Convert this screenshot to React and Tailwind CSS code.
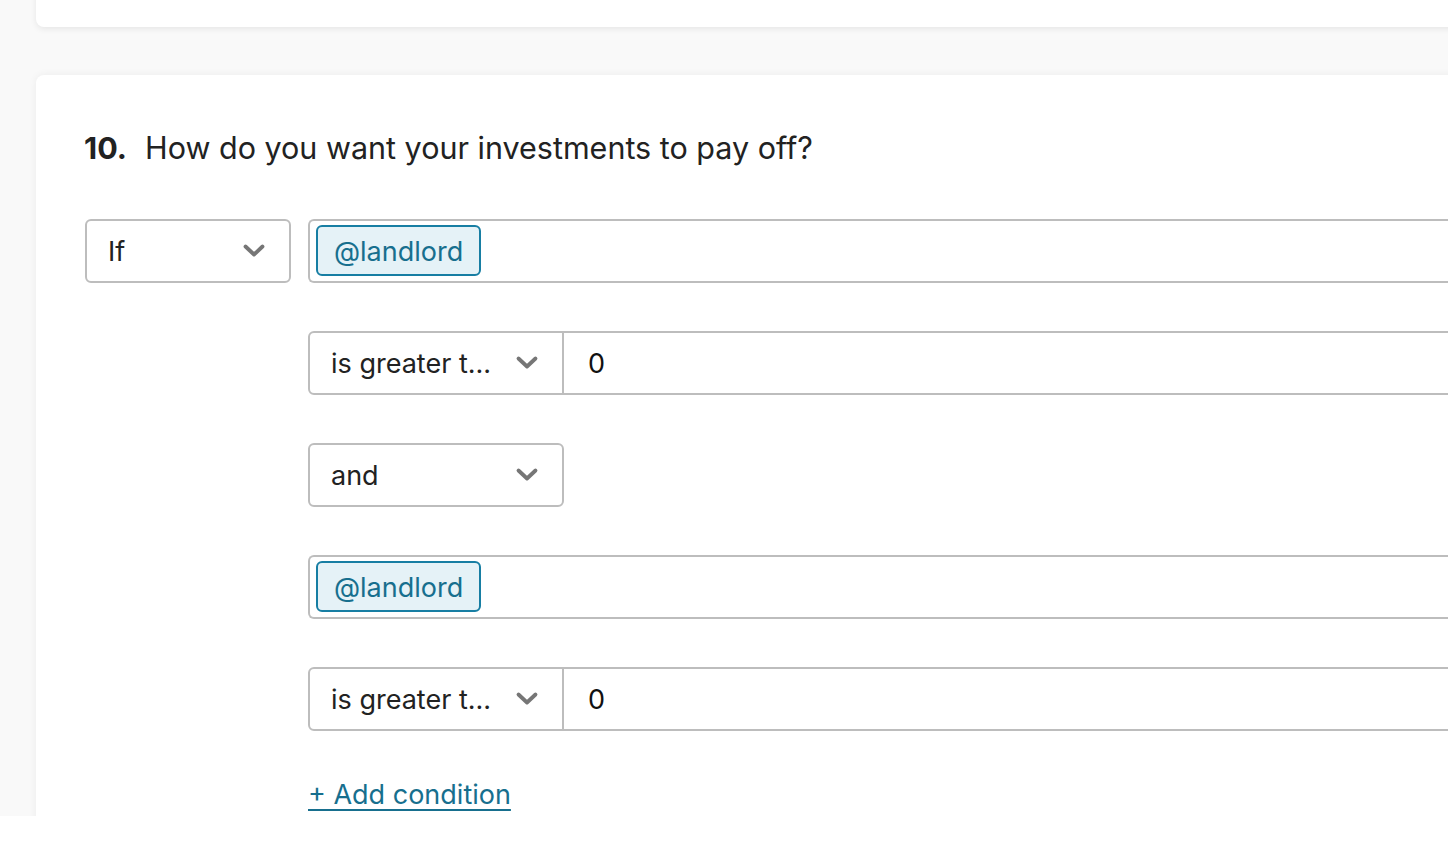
function Chevron() {
  return (
    <svg width="24" height="16" viewBox="0 0 24 16" className="shrink-0">
      <polyline
        points="3.5,3.5 12,11.5 20.5,3.5"
        fill="none"
        stroke="#767676"
        strokeWidth="3.8"
        strokeLinecap="round"
        strokeLinejoin="round"
      />
    </svg>
  )
}

function Select({ label, width }) {
  return (
    <div
      className={`flex items-center justify-between h-16 pl-[21px] pr-[23px] border-2 border-[#bdbdbd] rounded-md bg-white ${width}`}
    >
      <span className="mt-[3px] text-[27px] text-[#222]">{label}</span>
      <Chevron />
    </div>
  )
}

function TagField() {
  return (
    <div className="flex items-center w-full h-16 pl-[6px] border-2 border-r-0 border-[#bdbdbd] rounded-l-md bg-white">
      <span className="flex items-center h-[51px] pt-[3px] px-[16px] bg-[#e5f2f7] border-2 border-[#177ea3] rounded-md text-[27px] text-[#176f8e]">
        @landlord
      </span>
    </div>
  )
}

function Comparison() {
  return (
    <div className="flex w-full h-16">
      <div className="flex items-center justify-between w-[256px] h-16 pl-[21px] pr-[23px] border-2 border-[#bdbdbd] rounded-l-md bg-white">
        <span className="mt-[3px] text-[27px] text-[#222]">is greater t...</span>
        <Chevron />
      </div>
      <div className="flex items-center flex-1 h-16 pl-[24px] border-y-2 border-[#bdbdbd] bg-white">
        <span className="mt-[3px] text-[27px] text-[#111]">0</span>
      </div>
    </div>
  )
}

export default function App() {
  return (
    <div
      className="h-[816px] overflow-hidden bg-[#f9f9f9]"
      style={{ fontFamily: 'Inter, "Noto Sans", sans-serif' }}
    >
      {/* Previous question card */}
      <div className="ml-9 -mr-4 h-[27px] -mt-4 pt-4 box-content bg-white rounded-lg shadow-[0_2px_6px_rgba(0,0,0,0.08)]" />

      {/* Question card */}
      <div className="ml-9 -mr-4 mt-12 h-[760px] bg-white rounded-lg shadow-[0_0_8px_rgba(0,0,0,0.06)] pl-12 pt-[58px]">
        <h2 className="text-[30.5px] text-[#222] leading-none flex gap-[18px]">
          <span className="font-bold">10.</span>
          <span>How do you want your investments to pay off?</span>
        </h2>

        <div className="mt-[55px] flex gap-4">
          <div className="w-[207px] shrink-0 pl-px">
            <Select label="If" width="w-full" />
          </div>
          <div className="flex-1 flex flex-col gap-12 pl-px">
            <TagField />
            <Comparison />
            <Select label="and" width="w-[256px]" />
            <TagField />
            <Comparison />
            <a
              href="#"
              className="mt-[2px] text-[27px] text-[#176f8e] underline underline-offset-[5px] decoration-2 self-start leading-none"
            >
              + Add condition
            </a>
          </div>
        </div>
      </div>
    </div>
  )
}
